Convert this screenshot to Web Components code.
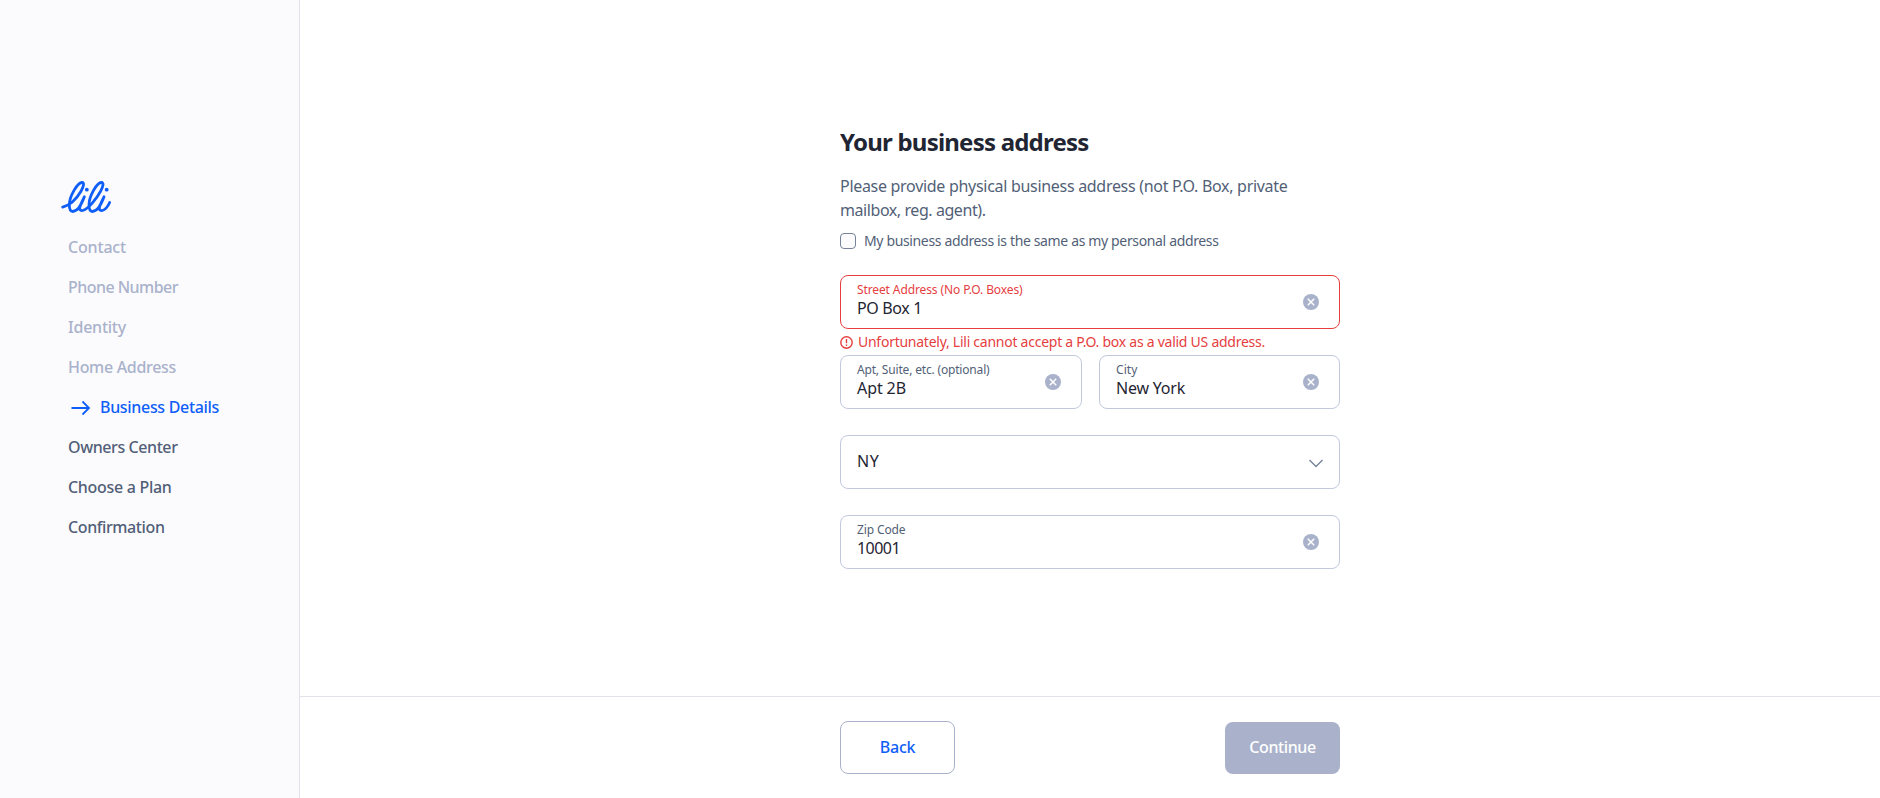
<!DOCTYPE html>
<html lang="en">
<head>
<meta charset="utf-8">
<title>Lili – Your business address</title>
<style>
html,body{margin:0;height:100%;overflow:hidden;background:#fff}
body{font-family:"Noto Sans","Open Sans",sans-serif;font-stretch:93%;color:#1f2533}
</style>
</head>
<body>
<lili-app></lili-app>
<script>
const define = (name, html, setup) => customElements.define(name, class extends HTMLElement {
  connectedCallback() {
    if (this.shadowRoot) return;
    const t = document.createElement('template');
    t.innerHTML = html;
    this.attachShadow({mode: 'open'}).appendChild(t.content.cloneNode(true));
    if (setup) setup.call(this, this.shadowRoot);
  }
});

/* Text tracked to a given measure, in pixels. */
define('lili-text', `<style>:host{display:inline-block;white-space:nowrap}span{display:inline-block}</style><span><slot></slot></span>`, function (root) {
  const target = +this.getAttribute('measure');
  const w = root.querySelector('span').getBoundingClientRect().width;
  if (target && w) this.style.letterSpacing = ((target - w) / this.textContent.length).toFixed(3) + 'px';
});

define('lili-logo', `<style>:host{display:block;width:52px;height:38px}svg{display:block}</style>
<svg width="52" height="38" viewBox="0 0 156 114" fill="none" stroke="#0f5ef7" stroke-width="8.4" stroke-linecap="round" stroke-linejoin="round">
<g transform="translate(0 2.5)"><path d="M8 91C30 85 50 65 63 43C72 27 73 17 66 17C53 17 28 58 28 84C28 98 32 104 38 104C53 104 65 82 73 60M73 60C65 76 59 88 59 94C59 100 63 102 68 101C84 98 112 62 122 43C130 28 132 17 124 17C111 17 87 58 87 84C87 98 91 104 97 104C112 104 124 82 132 60M132 60C124 76 118 88 118 94C118 100 122 102 127 101C136 99 144 88 149 77"/>
<circle cx="80.5" cy="38.500" r="5.800" fill="#0f5ef7" stroke="none"/><circle cx="140" cy="38.500" r="5.800" fill="#0f5ef7" stroke="none"/></g></svg>`);

define('lili-step', `<style>
:host{display:flex;align-items:center;height:40px;font-size:16px;font-weight:500;color:#525f77}
:host([state=done]){color:#a9b2ca}
:host([state=current]){color:#0f5ef7;padding-left:3px}
svg{display:none;margin-right:9px;position:relative;top:1px}
:host([state=current]) svg{display:block}
</style><svg width="20" height="16" viewBox="0 0 20 16" fill="none" stroke="currentColor" stroke-width="1.8"><path d="M.5 8H18M11.500 1.500L18 8l-6.500 6.500"/></svg><slot></slot>`);

define('lili-clear', `<style>:host{display:block;width:16px;height:16px}svg{display:block}</style>
<svg width="16" height="16" viewBox="0 0 16 16"><circle cx="8" cy="8" r="8" fill="#a9b2ca"/><path d="M4.800 4.800l6.400 6.400M11.200 4.800l-6.400 6.400" stroke="#fff" stroke-width="1.500"/></svg>`);

define('lili-field', `<style>
:host{display:flex;box-sizing:border-box;height:54px;border:1px solid #c1c9dd;border-radius:8px;padding:0 20px 0 16px;align-items:center;justify-content:space-between;background:#fff}
:host([error]){border-color:#e5403f}
.l{font-size:12px;line-height:16px;color:#525f77}
:host([error]) .l{color:#e5403f}
.v{font-size:16px;line-height:20px;color:#1f2533}
.copy{display:flex;flex-direction:column;padding-bottom:4px}
</style><div class="copy"><div class="l"><slot name="label"></slot></div><div class="v"><slot></slot></div></div><lili-clear></lili-clear>`);

define('lili-select', `<style>
:host{display:flex;box-sizing:border-box;height:54px;border:1px solid #c1c9dd;border-radius:8px;padding:0 16px;align-items:center;justify-content:space-between;font-size:16px;color:#1f2533}
.v{padding-bottom:2px}
svg{display:block;margin-top:2px}
</style><div class="v"><slot></slot></div><svg width="14" height="9" viewBox="0 0 14 9" fill="none" stroke="#77839b" stroke-width="1.4"><path d="M.5 1L7 7.500 13.500 1"/></svg>`);

define('lili-error', `<style>
:host{display:flex;align-items:center;gap:5px;height:26px;color:#e5403f;font-size:14px;line-height:20px}
svg{display:block}
</style><svg width="13" height="13" viewBox="0 0 13 13" fill="none" stroke="currentColor" stroke-width="1.400"><circle cx="6.500" cy="6.500" r="5.700"/><path d="M6.500 3v4.200M6.500 8.600v1.500"/></svg><slot></slot>`);

define('lili-checkbox', `<style>
:host{display:flex;align-items:center;gap:8px;height:20px;font-size:14px;line-height:20px;color:#525f77}
i{box-sizing:border-box;width:16px;height:16px;border:1px solid #77839b;border-radius:4px;background:#fbfbfe}
</style><i></i><slot></slot>`);

define('lili-button', `<style>
:host{display:block}
button{display:flex;align-items:center;justify-content:center;box-sizing:border-box;width:115px;height:53px;padding:0 0 1px;border:1px solid #a9b2ca;border-radius:8px;background:#fff;color:#0f5ef7;font-family:inherit;font-stretch:inherit;font-size:16px;font-weight:500}
:host([disabled]) button{height:52px;border:0;padding-bottom:2px;background:#a9b2ca;color:#fff}
</style><button><slot></slot></button>`);

define('lili-sidebar', `<style>
:host{display:block;box-sizing:border-box;width:300px;height:100%;border-right:1px solid #e1e2ea;background:#fbfbfe;padding:176px 0 0 60px}
nav{padding:13px 0 0 8px}
</style><lili-logo></lili-logo><nav>
<lili-step state="done"><lili-text measure="58">Contact</lili-text></lili-step>
<lili-step state="done"><lili-text measure="110">Phone Number</lili-text></lili-step>
<lili-step state="done"><lili-text measure="58">Identity</lili-text></lili-step>
<lili-step state="done"><lili-text measure="108">Home Address</lili-text></lili-step>
<lili-step state="current"><lili-text measure="119">Business Details</lili-text></lili-step>
<lili-step><lili-text measure="109.5">Owners Center</lili-text></lili-step>
<lili-step><lili-text measure="103.5">Choose a Plan</lili-text></lili-step>
<lili-step><lili-text measure="96.5">Confirmation</lili-text></lili-step>
</nav>`);

define('lili-address-form', `<style>
:host{display:block;width:500px;margin:0 auto;padding-top:124px}
h1{margin:0;font-size:24px;line-height:36px;font-weight:700;color:#1f2533}
p{margin:14px 0 0;font-size:16px;line-height:24px;color:#525f77}
lili-checkbox{margin:9px 0 24px}
.row{display:grid;grid-template-columns:242px 241px;gap:17px;margin-bottom:26px}
lili-select{margin-bottom:26px}
</style>
<h1><lili-text measure="248.5">Your business address</lili-text></h1>
<p><lili-text measure="447.5">Please provide physical business address (not P.O. Box, private</lili-text><br><lili-text measure="145.5">mailbox, reg. agent).</lili-text></p>
<lili-checkbox><lili-text measure="354.5">My business address is the same as my personal address</lili-text></lili-checkbox>
<lili-field error><lili-text slot="label" measure="165.5">Street Address (No P.O. Boxes)</lili-text><lili-text measure="65">PO Box 1</lili-text></lili-field>
<lili-error><lili-text measure="407">Unfortunately, Lili cannot accept a P.O. box as a valid US address.</lili-text></lili-error>
<div class="row">
<lili-field><lili-text slot="label" measure="132.5">Apt, Suite, etc. (optional)</lili-text><lili-text measure="49">Apt 2B</lili-text></lili-field>
<lili-field><lili-text slot="label" measure="21.5">City</lili-text><lili-text measure="69">New York</lili-text></lili-field>
</div>
<lili-select><lili-text measure="22.5">NY</lili-text></lili-select>
<lili-field><lili-text slot="label" measure="48.5">Zip Code</lili-text><lili-text measure="43">10001</lili-text></lili-field>`);

define('lili-footer', `<style>
:host{display:block;box-sizing:border-box;height:102px;border-top:1px solid #e1e2ea}
div{width:500px;margin:0 auto;height:53px;padding-top:24px;display:flex;justify-content:space-between;align-items:flex-end}
</style><div><lili-button><lili-text measure="35.5">Back</lili-text></lili-button><lili-button disabled><lili-text measure="66.5">Continue</lili-text></lili-button></div>`);

define('lili-app', `<style>
:host{display:grid;grid-template-columns:300px 1fr;height:100vh}
main{display:grid;grid-template-rows:1fr 102px;min-height:0}
</style><lili-sidebar></lili-sidebar><main><lili-address-form></lili-address-form><lili-footer></lili-footer></main>`);
</script>
</body>
</html>
